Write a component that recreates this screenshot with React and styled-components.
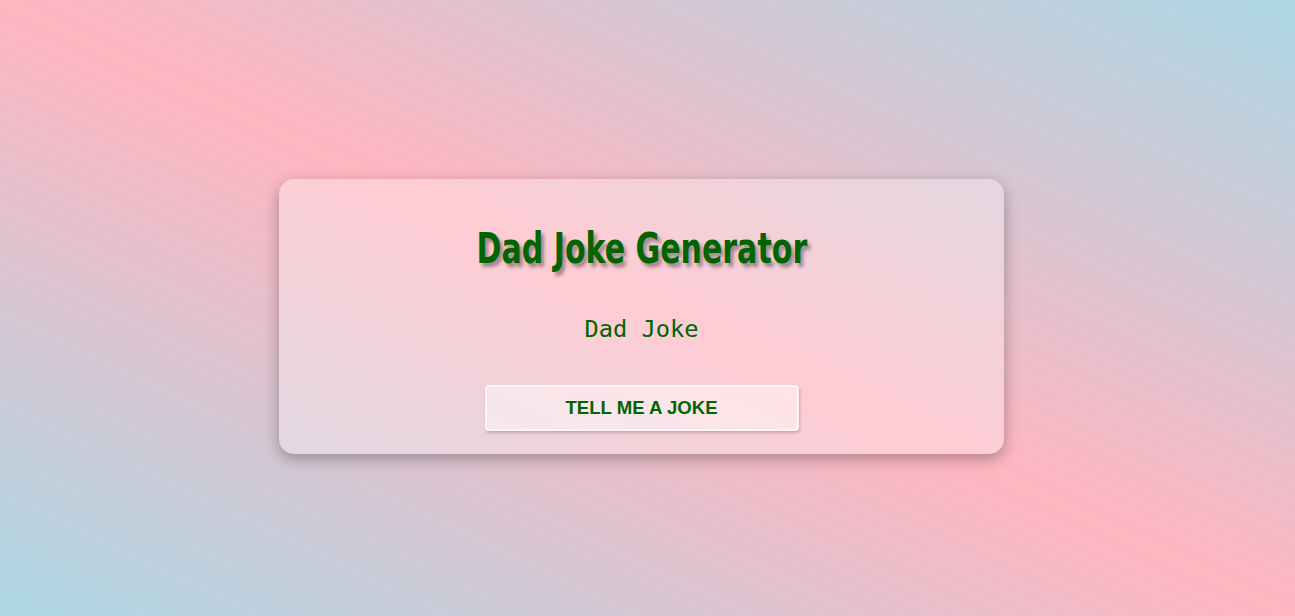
import React, { useState } from 'react';
import styled, { createGlobalStyle } from 'styled-components';

const GlobalStyle = createGlobalStyle`
    html, body {
        margin: 0;
        padding: 0;
        height: 100%;
    }

    body {
        background: linear-gradient(to top right, #add8e6, #ffb6c1, #add8e6);
        font-family: "Liberation Sans", Arial, sans-serif;
    }
`;

const Page = styled.div`
    min-height: 100vh;
    box-sizing: border-box;
    display: flex;
    align-items: center;
    justify-content: center;
    padding: 16px 12px 0 0;
`;

const Card = styled.div`
    width: 725px;
    box-sizing: border-box;
    padding: 46px 20px 23px;
    display: flex;
    flex-direction: column;
    align-items: center;
    background: rgba(255, 255, 255, 0.3);
    border-radius: 15px;
    box-shadow: 0 5px 15px rgba(0, 0, 0, 0.3);
`;

const Title = styled.h1`
    margin: 0;
    font-family: Impact, "DejaVu Sans Condensed", sans-serif;
    font-weight: bold;
    font-size: 42px;
    line-height: 48px;
    color: #006400;
    text-shadow: 4px 4px 4px rgba(0, 0, 0, 0.35);
    display: inline-block;
    white-space: nowrap;
    transform: scaleX(0.795);
`;

const Joke = styled.p`
    margin: 41px 0 0;
    font-family: "DejaVu Sans Mono", "Liberation Mono", monospace;
    font-size: 23.7px;
    line-height: 30px;
    color: #006400;
    text-align: center;
`;

const Button = styled.button`
    margin-top: 41px;
    width: 314px;
    height: 46px;
    background: rgba(255, 255, 255, 0.45);
    border: 2px solid rgba(255, 255, 255, 0.6);
    border-radius: 4px;
    box-shadow: 1px 2px 3px rgba(0, 0, 0, 0.2);
    font-family: "Liberation Sans", Arial, sans-serif;
    font-weight: bold;
    font-size: 18.6px;
    color: #006400;
    text-transform: uppercase;
    cursor: pointer;
`;

export default function App() {
    const [joke] = useState('Dad Joke');

    return (
        <>
            <GlobalStyle />
            <Page>
                <Card>
                    <Title>Dad Joke Generator</Title>
                    <Joke>{joke}</Joke>
                    <Button>Tell me a joke</Button>
                </Card>
            </Page>
        </>
    );
}
